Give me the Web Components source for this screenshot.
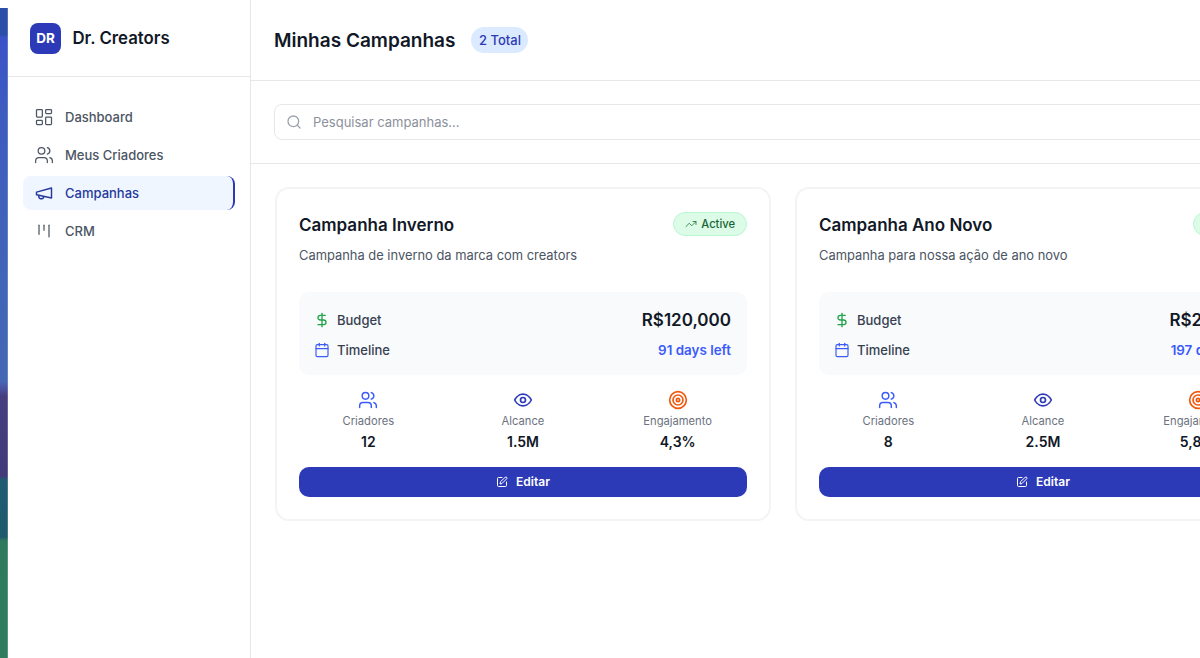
<!DOCTYPE html>
<html lang="pt">
<head>
<meta charset="utf-8">
<title>Minhas Campanhas</title>
<style>
    html, body { margin: 0; height: 100%; overflow: hidden; background: #fff; }
    body { font-family: Inter, "Liberation Sans", sans-serif; }
</style>
</head>
<body>
<app-shell>
    <side-bar slot="side">
        <nav-item icon="dashboard">Dashboard</nav-item>
        <nav-item icon="users">Meus Criadores</nav-item>
        <nav-item icon="megaphone" active="true">Campanhas</nav-item>
        <nav-item icon="crm">CRM</nav-item>
    </side-bar>
    <page-header slot="main" total="2 Total">Minhas Campanhas</page-header>
    <search-bar slot="main" placeholder="Pesquisar campanhas..."></search-bar>
    <card-list slot="main">
        <campaign-card name="Campanha Inverno" desc="Campanha de inverno da marca com creators" budget="R$120,000" left="91 days left" creators="12" reach="1.5M" engagement="4,3%"></campaign-card>
        <campaign-card name="Campanha Ano Novo" desc="Campanha para nossa ação de ano novo" budget="R$25,000" left="197 days left" creators="8" reach="2.5M" engagement="5,8%"></campaign-card>
    </card-list>
</app-shell>

<script>
const icons = {
    dashboard: '<rect x="3" y="3" width="7" height="9" rx="1"/><rect x="14" y="3" width="7" height="5" rx="1"/><rect x="14" y="12" width="7" height="9" rx="1"/><rect x="3" y="16" width="7" height="5" rx="1"/>',
    users: '<path d="M16 21v-2a4 4 0 0 0-4-4H6a4 4 0 0 0-4 4v2"/><circle cx="9" cy="7" r="4"/><path d="M22 21v-2a4 4 0 0 0-3-3.87"/><path d="M16 3.13a4 4 0 0 1 0 7.75"/>',
    megaphone: '<path d="m3 11 18-5v12L3 14v-3z"/><path d="M11.6 16.8a3 3 0 1 1-5.8-1.6"/>',
    crm: '<path d="M6 5v11"/><path d="M12 5v6"/><path d="M18 5v14"/>',
    search: '<circle cx="11" cy="11" r="8"/><path d="m21 21-4.3-4.3"/>',
    dollar: '<path d="M12 2v20"/><path d="M17 5H9.5a3.5 3.5 0 0 0 0 7h5a3.5 3.5 0 0 1 0 7H6"/>',
    calendar: '<path d="M8 2v4"/><path d="M16 2v4"/><rect x="3" y="4" width="18" height="18" rx="2"/><path d="M3 10h18"/>',
    eye: '<path d="M2 12s3.5-7 10-7 10 7 10 7-3.5 7-10 7-10-7-10-7z"/><circle cx="12" cy="12" r="3"/>',
    target: '<circle cx="12" cy="12" r="10"/><circle cx="12" cy="12" r="6"/><circle cx="12" cy="12" r="2"/>',
    trend: '<path d="m22 7-8.5 8.5-5-5L2 17"/><path d="M16 7h6v6"/>',
    edit: '<path d="M12 3H5a2 2 0 0 0-2 2v14a2 2 0 0 0 2 2h14a2 2 0 0 0 2-2v-7"/><path d="M18.4 2.6a2.1 2.1 0 0 1 3 3L12 15l-4 1 1-4z"/>'
};

function icon(name, size, color, width){
    return `<svg width="${size}" height="${size}" viewBox="0 0 24 24" fill="none" stroke="${color}" stroke-width="${width || 2}" stroke-linecap="round" stroke-linejoin="round" aria-hidden="true">${icons[name]}</svg>`;
}

class AppShell extends HTMLElement {
    constructor(){
        super();
        this.attachShadow({mode:'open'});
        this.shadowRoot.innerHTML = /* html */ `
            <style>
                :host { display: flex; height: 658px; width: 1200px; overflow: hidden; }
                .strip {
                    width: 8px; flex: none; margin-top: 8px;
                    box-shadow: inset -1px 0 rgba(255,255,255,.2);
                    background: linear-gradient(180deg, #2b4fa8 0, #2b4fa8 27px, #3a52c8 29px, #3d5cc0 100px, #4064b8 250px, #4468b4 373px, #4a5aa8 378px, #453f80 388px, #423a78 468px, #1f5c72 472px, #1e5a6e 529px, #2f7a5c 533px, #2f7d60 650px);
                }
                .side { width: 243px; flex: none; }
                .main { flex: 1; min-width: 0; display: flex; flex-direction: column; }
            </style>
            <div class="strip"></div>
            <div class="side"><slot name="side"></slot></div>
            <div class="main"><slot name="main"></slot></div>
        `;
    }
}

class SideBar extends HTMLElement {
    constructor(){
        super();
        this.attachShadow({mode:'open'});
        this.shadowRoot.innerHTML = /* html */ `
            <style>
                :host { display: flex; flex-direction: column; height: 658px; box-sizing: border-box; border-right: 1px solid #e5e7eb; background: #fff; }
                .brand { height: 77px; box-sizing: border-box; padding-left: 22px; display: flex; align-items: center; gap: 11.5px; border-bottom: 1px solid #e5e7eb; }
                .logo { width: 31px; height: 31px; border-radius: 8px; background: #2c3ab7; color: #fff; font-size: 13.5px; font-weight: 700; display: flex; align-items: center; justify-content: center; }
                .name { font-size: 16.8px; font-weight: 600; color: #111827; }
                nav { padding: 23px 15px 0; display: flex; flex-direction: column; gap: 4px; }
            </style>
            <div class="brand"><div class="logo">DR</div><div class="name">Dr. Creators</div></div>
            <nav><slot></slot></nav>
        `;
    }
}

class NavItem extends HTMLElement {
    constructor(){
        super();
        this.attachShadow({mode:'open'});
        const active = this.getAttribute('active') === 'true';
        const color = active ? '#25389b' : '#4b5563';
        this.shadowRoot.innerHTML = /* html */ `
            <style>
                :host { display: block; }
                .item { height: 34px; box-sizing: border-box; padding-left: 11px; display: flex; align-items: center; gap: 11px; border-radius: 8px; font-size: 13px; font-weight: 500; color: ${color}; }
                .on { background: #eff6ff; border-right: 2px solid #2c3ab7; }
                svg { flex: none; }
            </style>
            <div class="item ${active ? 'on' : ''}">${icon(this.getAttribute('icon'), 20, color, active ? 1.75 : 1.5)}<span><slot></slot></span></div>
        `;
    }
}

class PageHeader extends HTMLElement {
    constructor(){
        super();
        this.attachShadow({mode:'open'});
        this.shadowRoot.innerHTML = /* html */ `
            <style>
                :host { display: flex; align-items: center; gap: 16px; height: 81px; box-sizing: border-box; padding-left: 23px; border-bottom: 1px solid #e5e7eb; }
                h1 { margin: 0; font-size: 19px; font-weight: 600; color: #111827; }
                .badge { height: 26px; padding: 0 7.5px; display: flex; align-items: center; border-radius: 13px; background: #dbeafe; color: #2c3ab7; font-size: 13px; font-weight: 500; }
            </style>
            <h1><slot></slot></h1>
            <div class="badge">${this.getAttribute('total')}</div>
        `;
    }
}

class SearchBar extends HTMLElement {
    constructor(){
        super();
        this.attachShadow({mode:'open'});
        this.shadowRoot.innerHTML = /* html */ `
            <style>
                :host { display: block; height: 83px; box-sizing: border-box; padding: 23px 0 0 23px; border-bottom: 1px solid #e5e7eb; }
                .box { width: 1100px; height: 36px; box-sizing: border-box; border: 1px solid #e5e7eb; border-radius: 8px; display: flex; align-items: center; gap: 11px; padding-left: 11px; color: #8b919c; font-size: 13px; }
            </style>
            <div class="box">${icon('search', 16, '#9ca3af')}<span>${this.getAttribute('placeholder')}</span></div>
        `;
    }
}

class CardList extends HTMLElement {
    constructor(){
        super();
        this.attachShadow({mode:'open'});
        this.shadowRoot.innerHTML = /* html */ `
            <style>
                :host { display: flex; gap: 24px; padding: 23px 0 0 24px; }
            </style>
            <slot></slot>
        `;
    }
}

class CampaignCard extends HTMLElement {
    constructor(){
        super();
        this.attachShadow({mode:'open'});
        const a = n => this.getAttribute(n);
        this.shadowRoot.innerHTML = /* html */ `
            <style>
                :host { display: block; flex: none; width: 496px; height: 334px; box-sizing: border-box; padding: 23px 22px 0; border: 2px solid #f3f4f6; border-radius: 14px; background: #fff; color: #111827; }
                .top { display: flex; justify-content: space-between; align-items: center; height: 24px; }
                h2 { margin: 0; padding-top: 2px; font-size: 17px; font-weight: 600; }
                .status { height: 24px; box-sizing: border-box; padding: 0 11px; display: flex; align-items: center; gap: 4px; border-radius: 12px; border: 1px solid #bbf7d0; background: #dcfce7; color: #166534; font-size: 11.2px; font-weight: 500; }
                .desc { margin-top: 10px; font-size: 12.9px; line-height: 20px; color: #4b5563; }
                .info { margin-top: 26px; height: 83px; box-sizing: border-box; padding: 17px 16px 0 15px; background: #f9fafb; border-radius: 10px; display: flex; flex-direction: column; gap: 8px; }
                .row { display: flex; align-items: center; height: 22px; font-size: 13px; font-weight: 500; color: #374151; }
                .row svg { margin-right: 7px; }
                .row b { margin-left: auto; font-weight: 600; }
                .money { font-size: 17px; color: #111827; }
                .days { font-size: 13.4px; color: #3b5bfb; }
                .stats { margin-top: 15px; display: grid; grid-template-columns: repeat(3, 1fr); gap: 16px; text-align: center; }
                .stat svg { display: block; margin: 0 auto; }
                .stat small { display: block; margin-top: 3px; font-size: 11.2px; line-height: 16px; color: #6b7280; }
                .stat strong { display: block; margin-top: 4px; font-size: 14px; line-height: 18px; font-weight: 600; }
                button { margin-top: 15.5px; width: 100%; height: 30.5px; border: 0; border-radius: 10px; background: #2c3ab7; color: #fff; font: 600 12px Inter, sans-serif; display: flex; align-items: center; justify-content: center; gap: 8px; }
            </style>
            <div class="top"><h2>${a('name')}</h2><div class="status">${icon('trend', 12, '#166534', 1.5)}Active</div></div>
            <div class="desc">${a('desc')}</div>
            <div class="info">
                <div class="row">${icon('dollar', 16, '#22a34a')}Budget<b class="money">${a('budget')}</b></div>
                <div class="row">${icon('calendar', 16, '#3b5bfb', 1.75)}Timeline<b class="days">${a('left')}</b></div>
            </div>
            <div class="stats">
                <div class="stat">${icon('users', 20, '#3b5bfb', 1.75)}<small>Criadores</small><strong>${a('creators')}</strong></div>
                <div class="stat">${icon('eye', 20, '#2c3ab7')}<small>Alcance</small><strong>${a('reach')}</strong></div>
                <div class="stat">${icon('target', 20, '#f05a0e')}<small>Engajamento</small><strong>${a('engagement')}</strong></div>
            </div>
            <button type="button">${icon('edit', 12, '#fff')}Editar</button>
        `;
    }
}

customElements.define('app-shell', AppShell);
customElements.define('side-bar', SideBar);
customElements.define('nav-item', NavItem);
customElements.define('page-header', PageHeader);
customElements.define('search-bar', SearchBar);
customElements.define('card-list', CardList);
customElements.define('campaign-card', CampaignCard);
</script>
</body>
</html>
